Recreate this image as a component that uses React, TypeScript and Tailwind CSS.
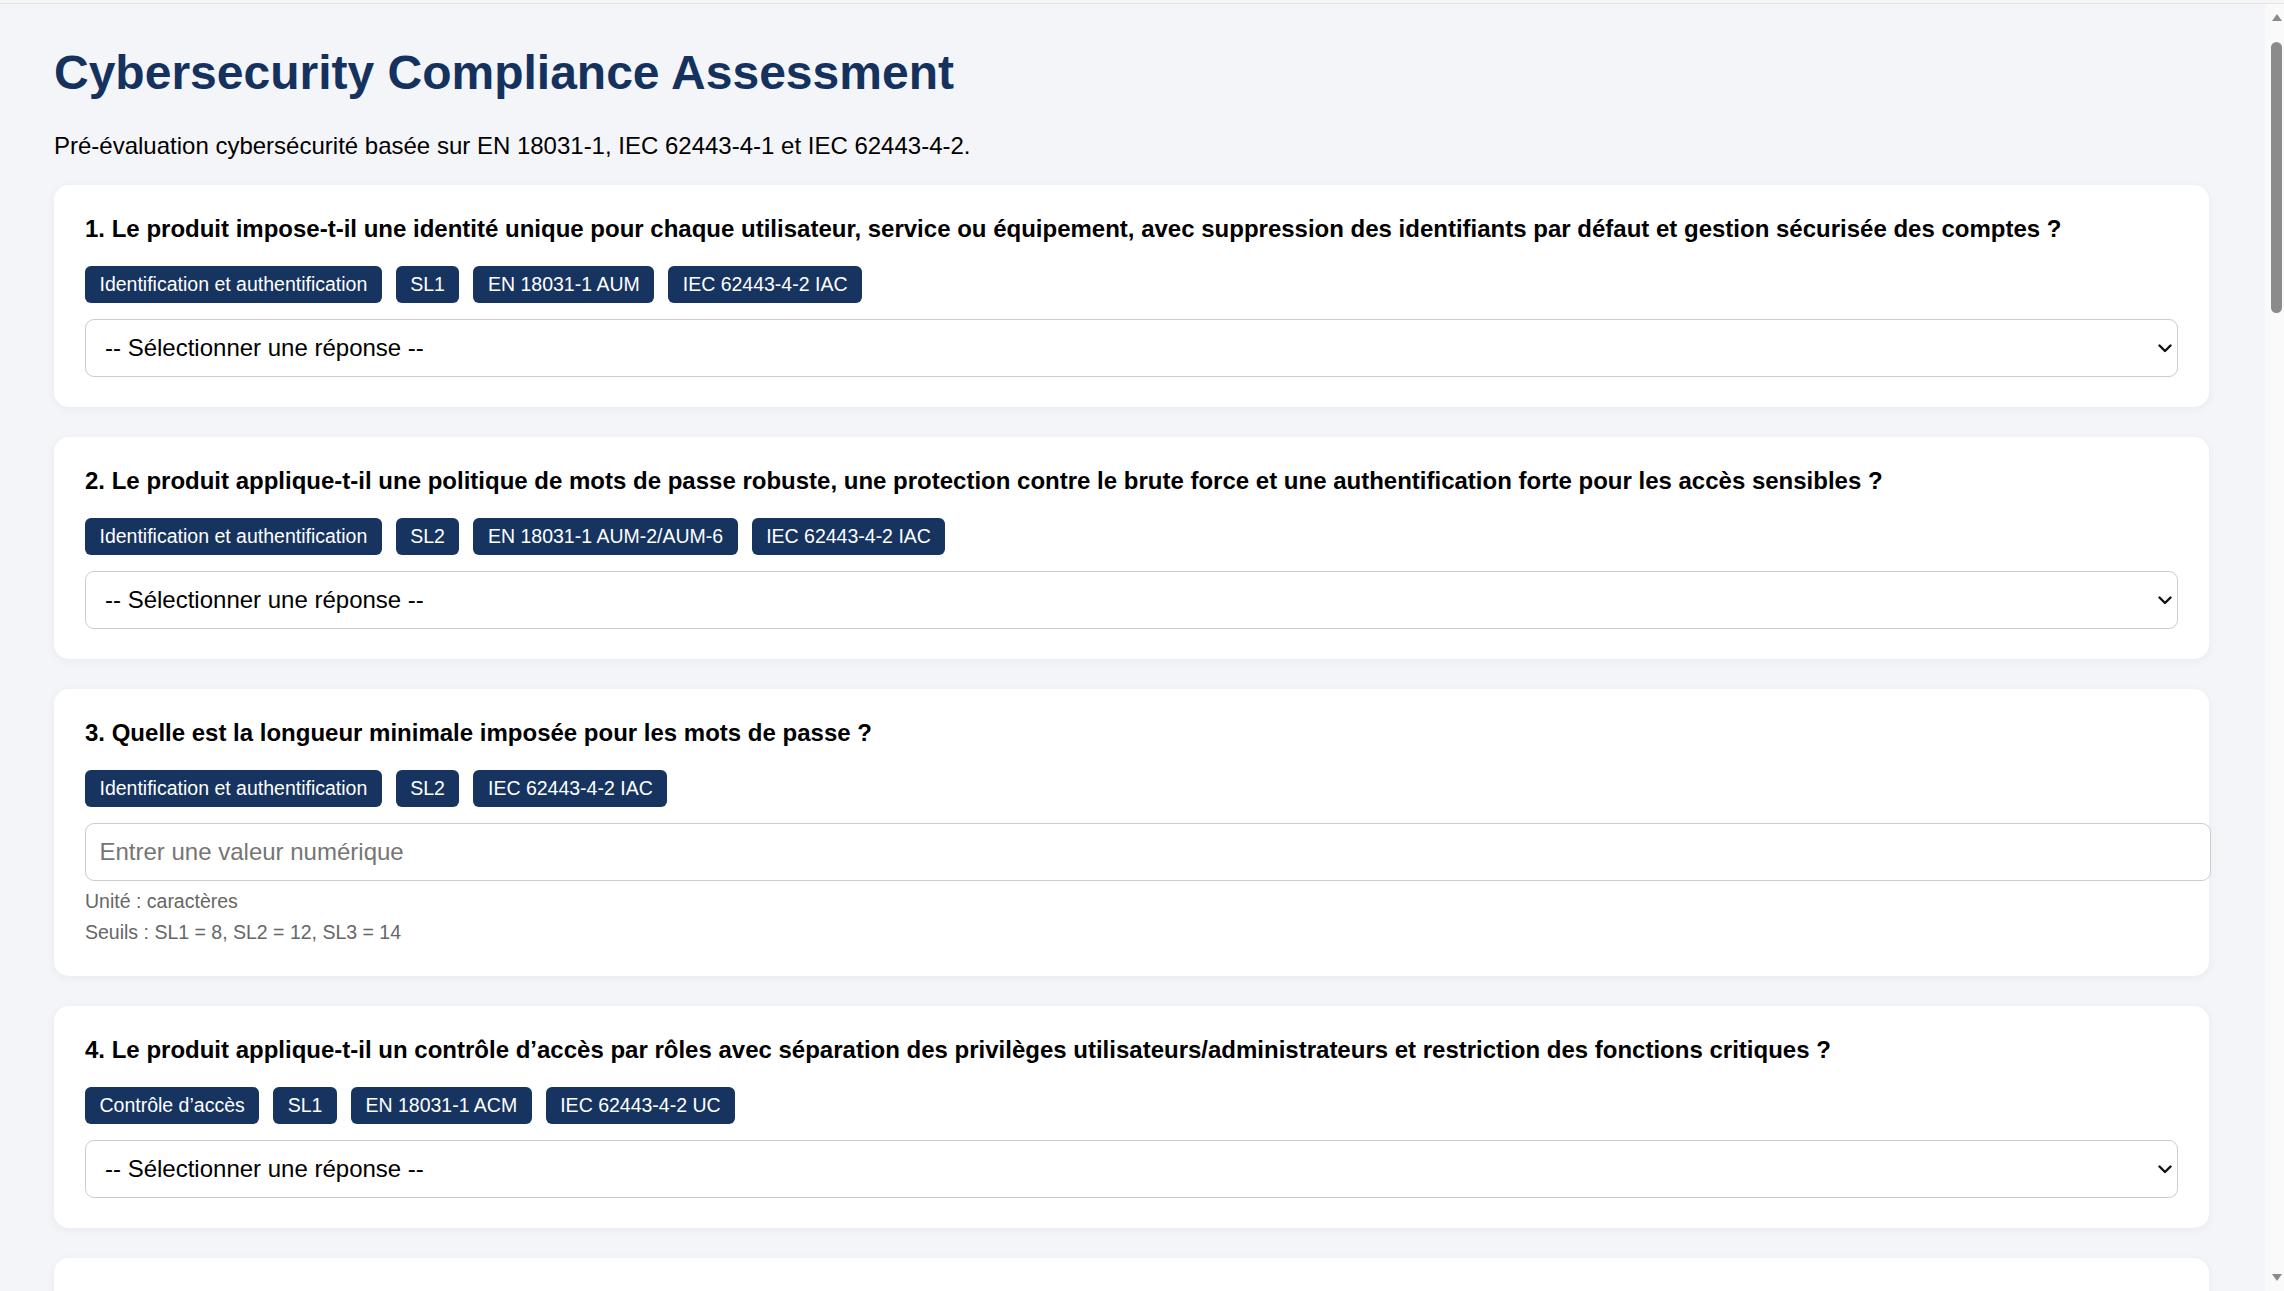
import React from "react";

type Question = {
    id: number;
    label: string;
    tags: string[];
    kind: "select" | "number";
    unit?: string;
    thresholds?: string;
};

const questions: Question[] = [
    {
        id: 1,
        label: "Le produit impose-t-il une identité unique pour chaque utilisateur, service ou équipement, avec suppression des identifiants par défaut et gestion sécurisée des comptes ?",
        tags: ["Identification et authentification", "SL1", "EN 18031-1 AUM", "IEC 62443-4-2 IAC"],
        kind: "select",
    },
    {
        id: 2,
        label: "Le produit applique-t-il une politique de mots de passe robuste, une protection contre le brute force et une authentification forte pour les accès sensibles ?",
        tags: ["Identification et authentification", "SL2", "EN 18031-1 AUM-2/AUM-6", "IEC 62443-4-2 IAC"],
        kind: "select",
    },
    {
        id: 3,
        label: "Quelle est la longueur minimale imposée pour les mots de passe ?",
        tags: ["Identification et authentification", "SL2", "IEC 62443-4-2 IAC"],
        kind: "number",
        unit: "caractères",
        thresholds: "SL1 = 8, SL2 = 12, SL3 = 14",
    },
    {
        id: 4,
        label: "Le produit applique-t-il un contrôle d’accès par rôles avec séparation des privilèges utilisateurs/administrateurs et restriction des fonctions critiques ?",
        tags: ["Contrôle d’accès", "SL1", "EN 18031-1 ACM", "IEC 62443-4-2 UC"],
        kind: "select",
    },
];

const Tag = ({ label }: { label: string }) => (
    <span className="h-[37px] px-[14.5px] rounded-[6px] bg-[#16345f] text-white text-[19.5px] flex items-center whitespace-nowrap">
        {label}
    </span>
);

const AnswerSelect = () => (
    <div className="relative mt-[16px]">
        <select
            defaultValue=""
            className="appearance-none w-full h-[58px] border-[1.5px] border-[#cdcdcd] rounded-[9px] bg-white pl-[19px] text-[24px] text-black outline-none"
        >
            <option value="">-- Sélectionner une réponse --</option>
            <option value="yes">Oui</option>
            <option value="partial">Partiellement</option>
            <option value="no">Non</option>
        </select>
        <svg className="pointer-events-none absolute right-[6px] top-[25px]" width="14" height="9" viewBox="0 0 14 9" fill="none">
            <path d="M1.5 1.5 7 7l5.5-5.5" stroke="#111" strokeWidth="2.4" strokeLinecap="round" strokeLinejoin="round" />
        </svg>
    </div>
);

const QuestionCard = ({ question }: { question: Question }) => (
    <div className="bg-white rounded-[15px] pl-[31px] pr-[31px] py-[30px] shadow-[0_2px_10px_rgba(20,30,60,0.05)]">
        <p className="text-[24px] leading-[27px] font-bold text-black">
            {question.id}. {question.label}
        </p>
        <div className="flex flex-wrap gap-[14px] mt-[24px]">
            {question.tags.map((tag, index) => (
                <Tag key={index} label={tag} />
            ))}
        </div>
        {question.kind === "select" ? <AnswerSelect /> : (
            <>
                <input
                    type="number"
                    placeholder="Entrer une valeur numérique"
                    className="block mt-[16px] w-[calc(100%+33px)] h-[58px] border-[1.5px] border-[#cdcdcd] rounded-[9px] bg-white pl-[13.5px] text-[24px] text-black placeholder:text-[#757575] outline-none"
                />
                <div className="mt-[7px] flex flex-col gap-[4px] text-[19.5px] leading-[27px] text-[#666]">
                    <p>Unité : {question.unit}</p>
                    <p>Seuils : {question.thresholds}</p>
                </div>
            </>
        )}
    </div>
);

const Scrollbar = () => (
    <div className="w-[19px] shrink-0 bg-[#fafafa] flex flex-col items-center pl-[4px] pt-[10px] pb-[10px]">
        <svg width="10" height="7" viewBox="0 0 10 7"><path d="M5 0 10 7H0z" fill="#8b8b8b" /></svg>
        <div className="mt-[21px] w-[11px] h-[271px] rounded-full bg-[#8b8b8b]" />
        <div className="flex-1" />
        <svg width="10" height="7" viewBox="0 0 10 7"><path d="M0 0h10L5 7z" fill="#8b8b8b" /></svg>
    </div>
);

export default function App() {
    return (
        <div className="h-screen w-full flex flex-col overflow-hidden bg-[#f6f6f6] font-['Liberation_Sans',Arial,sans-serif]">
            <div className="h-[4px] shrink-0 border-b border-[#e4e4e4]" />
            <div className="flex flex-1 min-h-0 rounded-tl-[8px] overflow-hidden bg-[#f4f5f9]">
                <main className="flex-1 min-w-0 overflow-hidden pl-[54px] pr-[56px] pt-[41px]">
                    <h1 className="text-[48px] leading-[55px] font-bold text-[#15325e]">Cybersecurity Compliance Assessment</h1>
                    <p className="mt-[32px] text-[24px] leading-[28px] text-black">
                        Pré-évaluation cybersécurité basée sur EN 18031-1, IEC 62443-4-1 et IEC 62443-4-2.
                    </p>
                    <div className="mt-[25px] flex flex-col gap-[30px]">
                        {questions.map((question) => (
                            <QuestionCard key={question.id} question={question} />
                        ))}
                        {/* next card, scrolled out of view */}
                        <div className="h-[222px] bg-white rounded-[15px] shadow-[0_2px_10px_rgba(20,30,60,0.05)]" />
                    </div>
                </main>
                <Scrollbar />
            </div>
        </div>
    );
}
